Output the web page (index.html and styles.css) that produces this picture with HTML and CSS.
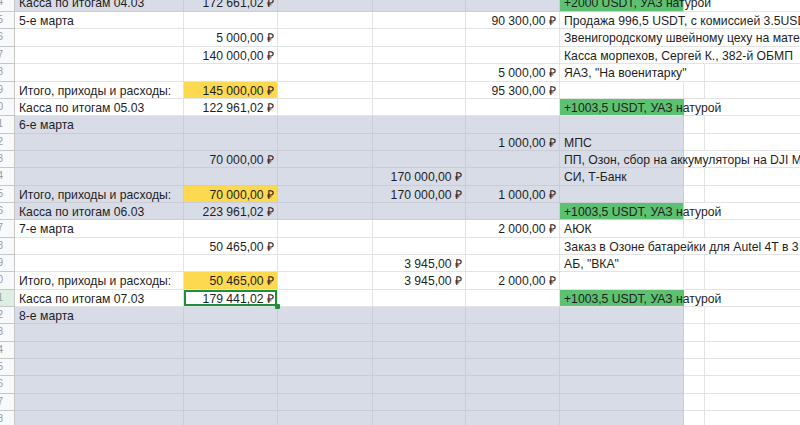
FILE: index.html
```html
<!DOCTYPE html>
<html lang="ru">
<head>
<meta charset="utf-8">
<link rel="stylesheet" href="styles.css">
</head>
<body>
<div class="sheet">
  <div class="row r18 g">
    <div class="c h"><span>4</span></div>
    <div class="c a">Касса по итогам 04.03</div>
    <div class="c b n">172 661,02 ₽</div>
    <div class="c cc"></div>
    <div class="c d"></div>
    <div class="c e"></div>
    <div class="c f grn ov">+2000 USDT, УАЗ натурой</div>
    <div class="c gg ov"></div>
    <div class="c hh"></div>
  </div>
  <div class="row r17">
    <div class="c h"><span>5</span></div>
    <div class="c a">5-е марта</div>
    <div class="c b"></div>
    <div class="c cc"></div>
    <div class="c d"></div>
    <div class="c e n">90 300,00 ₽</div>
    <div class="c f ov">Продажа 996,5 USDT, с комиссией 3.5USDT, курс 90,6</div>
    <div class="c gg ov"></div>
    <div class="c hh"></div>
  </div>
  <div class="row r18">
    <div class="c h"><span>6</span></div>
    <div class="c a"></div>
    <div class="c b n">5 000,00 ₽</div>
    <div class="c cc"></div>
    <div class="c d"></div>
    <div class="c e"></div>
    <div class="c f ov">Звенигородскому швейному цеху на материалы</div>
    <div class="c gg ov"></div>
    <div class="c hh"></div>
  </div>
  <div class="row r17">
    <div class="c h"><span>7</span></div>
    <div class="c a"></div>
    <div class="c b n">140 000,00 ₽</div>
    <div class="c cc"></div>
    <div class="c d"></div>
    <div class="c e"></div>
    <div class="c f ov">Касса морпехов, Сергей К., 382-й ОБМП</div>
    <div class="c gg ov"></div>
    <div class="c hh"></div>
  </div>
  <div class="row r18">
    <div class="c h"><span>8</span></div>
    <div class="c a"></div>
    <div class="c b"></div>
    <div class="c cc"></div>
    <div class="c d"></div>
    <div class="c e n">5 000,00 ₽</div>
    <div class="c f ov">ЯАЗ, "На военитарку"</div>
    <div class="c gg"></div>
    <div class="c hh"></div>
  </div>
  <div class="row r17">
    <div class="c h"><span>9</span></div>
    <div class="c a">Итого, приходы и расходы:</div>
    <div class="c b n yel">145 000,00 ₽</div>
    <div class="c cc"></div>
    <div class="c d"></div>
    <div class="c e n">95 300,00 ₽</div>
    <div class="c f"></div>
    <div class="c gg"></div>
    <div class="c hh"></div>
  </div>
  <div class="row r17">
    <div class="c h"><span>0</span></div>
    <div class="c a">Касса по итогам 05.03</div>
    <div class="c b n">122 961,02 ₽</div>
    <div class="c cc"></div>
    <div class="c d"></div>
    <div class="c e"></div>
    <div class="c f grn ov">+1003,5 USDT, УАЗ натурой</div>
    <div class="c gg ov"></div>
    <div class="c hh"></div>
  </div>
  <div class="row r18 g">
    <div class="c h"><span>1</span></div>
    <div class="c a">6-е марта</div>
    <div class="c b"></div>
    <div class="c cc"></div>
    <div class="c d"></div>
    <div class="c e"></div>
    <div class="c f"></div>
    <div class="c gg"></div>
    <div class="c hh"></div>
  </div>
  <div class="row r17 g">
    <div class="c h"><span>2</span></div>
    <div class="c a"></div>
    <div class="c b"></div>
    <div class="c cc"></div>
    <div class="c d"></div>
    <div class="c e n">1 000,00 ₽</div>
    <div class="c f">МПС</div>
    <div class="c gg"></div>
    <div class="c hh"></div>
  </div>
  <div class="row r17 g">
    <div class="c h"><span>3</span></div>
    <div class="c a"></div>
    <div class="c b n">70 000,00 ₽</div>
    <div class="c cc"></div>
    <div class="c d"></div>
    <div class="c e"></div>
    <div class="c f ov">ПП, Озон, сбор на аккумуляторы на DJI Mavic 3</div>
    <div class="c gg ov"></div>
    <div class="c hh"></div>
  </div>
  <div class="row r18 g">
    <div class="c h"><span>4</span></div>
    <div class="c a"></div>
    <div class="c b"></div>
    <div class="c cc"></div>
    <div class="c d n">170 000,00 ₽</div>
    <div class="c e"></div>
    <div class="c f">СИ, Т-Банк</div>
    <div class="c gg"></div>
    <div class="c hh"></div>
  </div>
  <div class="row r17 g">
    <div class="c h"><span>5</span></div>
    <div class="c a">Итого, приходы и расходы:</div>
    <div class="c b n yel">70 000,00 ₽</div>
    <div class="c cc"></div>
    <div class="c d n">170 000,00 ₽</div>
    <div class="c e n">1 000,00 ₽</div>
    <div class="c f"></div>
    <div class="c gg"></div>
    <div class="c hh"></div>
  </div>
  <div class="row r17 g">
    <div class="c h"><span>6</span></div>
    <div class="c a">Касса по итогам 06.03</div>
    <div class="c b n">223 961,02 ₽</div>
    <div class="c cc"></div>
    <div class="c d"></div>
    <div class="c e"></div>
    <div class="c f grn ov">+1003,5 USDT, УАЗ натурой</div>
    <div class="c gg ov"></div>
    <div class="c hh"></div>
  </div>
  <div class="row r18">
    <div class="c h"><span>7</span></div>
    <div class="c a">7-е марта</div>
    <div class="c b"></div>
    <div class="c cc"></div>
    <div class="c d"></div>
    <div class="c e n">2 000,00 ₽</div>
    <div class="c f">АЮК</div>
    <div class="c gg"></div>
    <div class="c hh"></div>
  </div>
  <div class="row r17">
    <div class="c h"><span>8</span></div>
    <div class="c a"></div>
    <div class="c b n">50 465,00 ₽</div>
    <div class="c cc"></div>
    <div class="c d"></div>
    <div class="c e"></div>
    <div class="c f ov">Заказ в Озоне батарейки для Autel 4T в 3 шт.</div>
    <div class="c gg ov"></div>
    <div class="c hh"></div>
  </div>
  <div class="row r17">
    <div class="c h"><span>9</span></div>
    <div class="c a"></div>
    <div class="c b"></div>
    <div class="c cc"></div>
    <div class="c d n">3 945,00 ₽</div>
    <div class="c e"></div>
    <div class="c f">АБ, "ВКА"</div>
    <div class="c gg"></div>
    <div class="c hh"></div>
  </div>
  <div class="row r18">
    <div class="c h"><span>0</span></div>
    <div class="c a">Итого, приходы и расходы:</div>
    <div class="c b n yel">50 465,00 ₽</div>
    <div class="c cc"></div>
    <div class="c d n">3 945,00 ₽</div>
    <div class="c e n">2 000,00 ₽</div>
    <div class="c f"></div>
    <div class="c gg"></div>
    <div class="c hh"></div>
  </div>
  <div class="row r17">
    <div class="c h sel-h"><span>1</span></div>
    <div class="c a">Касса по итогам 07.03</div>
    <div class="c b n sel">179 441,02 ₽</div>
    <div class="c cc"></div>
    <div class="c d"></div>
    <div class="c e"></div>
    <div class="c f grn ov">+1003,5 USDT, УАЗ натурой</div>
    <div class="c gg ov"></div>
    <div class="c hh"></div>
  </div>
  <div class="row r17 g">
    <div class="c h"><span>2</span></div>
    <div class="c a">8-е марта</div>
    <div class="c b"></div><div class="c cc"></div><div class="c d"></div><div class="c e"></div><div class="c f"></div><div class="c gg"></div><div class="c hh"></div>
  </div>
  <div class="row r18 g">
    <div class="c h"><span>3</span></div>
    <div class="c a"></div><div class="c b"></div><div class="c cc"></div><div class="c d"></div><div class="c e"></div><div class="c f"></div><div class="c gg"></div><div class="c hh"></div>
  </div>
  <div class="row r17 g">
    <div class="c h"><span>4</span></div>
    <div class="c a"></div><div class="c b"></div><div class="c cc"></div><div class="c d"></div><div class="c e"></div><div class="c f"></div><div class="c gg"></div><div class="c hh"></div>
  </div>
  <div class="row r17 g">
    <div class="c h"><span>5</span></div>
    <div class="c a"></div><div class="c b"></div><div class="c cc"></div><div class="c d"></div><div class="c e"></div><div class="c f"></div><div class="c gg"></div><div class="c hh"></div>
  </div>
  <div class="row r18 g">
    <div class="c h"><span>6</span></div>
    <div class="c a"></div><div class="c b"></div><div class="c cc"></div><div class="c d"></div><div class="c e"></div><div class="c f"></div><div class="c gg"></div><div class="c hh"></div>
  </div>
  <div class="row r17 g">
    <div class="c h"><span>7</span></div>
    <div class="c a"></div><div class="c b"></div><div class="c cc"></div><div class="c d"></div><div class="c e"></div><div class="c f"></div><div class="c gg"></div><div class="c hh"></div>
  </div>
  <div class="row r17 g">
    <div class="c h"><span>8</span></div>
    <div class="c a"></div><div class="c b"></div><div class="c cc"></div><div class="c d"></div><div class="c e"></div><div class="c f"></div><div class="c gg"></div><div class="c hh"></div>
  </div>
</div>
</body>
</html>
```

FILE: styles.css
```css
html, body {
  margin: 0;
  padding: 0;
  background: #ffffff;
  overflow: hidden;
  width: 800px;
  height: 425px;
}
.sheet {
  margin-top: -6px;
  width: 830px;
  font-family: "Liberation Sans", Arial, sans-serif;
  font-size: 12.2px;
  color: #1f1f1f;
}
.row {
  display: flex;
  background: #ffffff;
}
.r17 { height: 17px; }
.r18 { height: 18px; }
.c {
  box-sizing: border-box;
  flex: none;
  height: 100%;
  border-right: 1px solid #e2e3e3;
  border-bottom: 1px solid #e2e3e3;
  padding: 1px 3px 0 4px;
  white-space: nowrap;
  overflow: hidden;
  line-height: 16px;
}
.h {
  width: 15px;
  background: #f8f9fa;
  border-right: 1px solid #c7c7c7;
  border-bottom: 1px solid #c7c7c7;
  padding: 0 11px 0 0;
  text-align: right;
  font-size: 10px;
  color: #9a9a9a;
  direction: rtl;
}
.h span { display: inline-block; }
.sel-h { background: #dcefe2; }
.a { width: 169px; }
.b { width: 94px; }
.cc { width: 95px; }
.d { width: 93px; }
.e { width: 94px; }
.f { width: 124px; }
.gg { width: 21px; }
.hh { width: 140px; border-right: none; }
.n { text-align: right; }
.ov { overflow: visible; border-right-color: transparent; }
.g .a, .g .b, .g .cc, .g .d, .g .e, .g .f {
  background: #d8dce7;
  border-color: #c9cdd8;
}
.yel { background: #fcd94f; }
.g .yel { background: #fcd94f; }
.grn { background: #5cc171; }
.g .grn { background: #5cc171; }
.sel {
  position: relative;
  box-shadow: inset 0 0 0 2px #1e8e3e;
  overflow: visible;
}
.sel::after {
  content: "";
  position: absolute;
  right: -3px;
  bottom: -3px;
  width: 5px;
  height: 5px;
  background: #1e8e3e;
  border-radius: 1px;
}
```
